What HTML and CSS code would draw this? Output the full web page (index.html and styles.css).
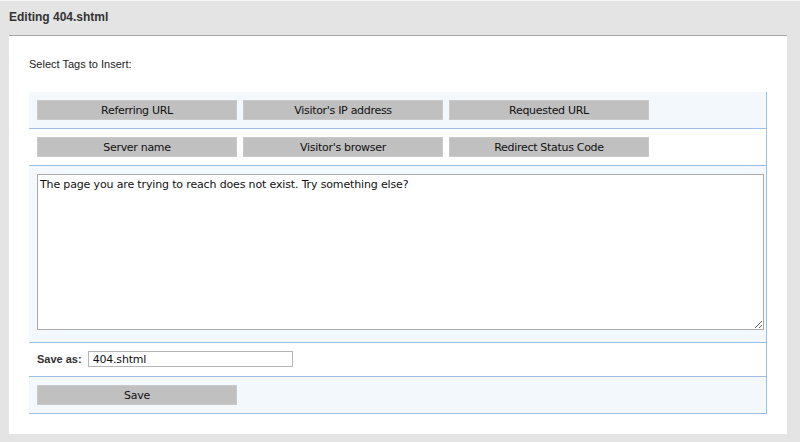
FILE: index.html
```html
<!DOCTYPE html>
<html>
<head>
<meta charset="utf-8">
<title>Editing 404.shtml</title>
<link rel="stylesheet" href="styles.css">
</head>
<body>
<div class="header">Editing 404.shtml</div>
<div class="panel">
  <p class="intro">Select Tags to Insert:</p>
  <div class="table">
    <div class="row alt">
      <button class="btn">Referring URL</button>
      <button class="btn">Visitor's IP address</button>
      <button class="btn">Requested URL</button>
    </div>
    <div class="row">
      <button class="btn">Server name</button>
      <button class="btn">Visitor's browser</button>
      <button class="btn">Redirect Status Code</button>
    </div>
    <div class="row alt editor-row">
      <textarea class="editor">The page you are trying to reach does not exist. Try something else?</textarea>
    </div>
    <div class="row save-row">
      <label class="save-label">Save as:</label>
      <input class="save-input" type="text" value="404.shtml">
    </div>
    <div class="row alt">
      <button class="btn">Save</button>
    </div>
  </div>
</div>
</body>
</html>
```
FILE: styles.css
```css
html, body {
  margin: 0;
  padding: 0;
  background: #e4e4e4;
  height: 442px;
  overflow: hidden;
}
body {
  border-top: 1px solid #f4f4f4;
  box-sizing: border-box;
}
.header {
  height: 34px;
  line-height: 33px;
  padding-left: 9px;
  font-family: "Liberation Sans", Arial, sans-serif;
  font-weight: bold;
  font-size: 12px;
  color: #333;
}
.panel {
  margin: 0 13px 0 9px;
  border-top: 1px solid #a6a6a6;
  background: #fff;
  height: 399px;
  box-sizing: border-box;
  padding: 20px 20px 0 20px;
}
.intro {
  margin: 0;
  height: 36px;
  line-height: 17px;
  font-family: "Liberation Sans", Arial, sans-serif;
  font-size: 11px;
  color: #222;
}
.table {
  border-right: 1px solid #9dbfe6;
}
.row {
  display: flex;
  align-items: center;
  gap: 6px;
  padding: 8px 8px;
  border-bottom: 1px solid #9dbfe6;
  background: #fff;
}
.row.alt {
  background: #f3f8fd;
}
.btn {
  flex: none;
  width: 200px;
  height: 20px;
  margin: 0;
  padding: 0;
  background: #c0c0c0;
  border: 1px solid #c9c9c9;
  font-family: "DejaVu Sans", sans-serif;
  font-size: 11px;
  letter-spacing: -0.3px;
  color: #111;
}
.editor-row {
  align-items: flex-start;
  padding: 8px 2px 12px 8px;
}
.editor {
  flex: none;
  display: block;
  width: 727px;
  height: 156px;
  box-sizing: border-box;
  margin: 0;
  padding: 3px 2px;
  border: 1px solid #aaa;
  background: #fff;
  font-family: "DejaVu Sans", sans-serif;
  font-size: 11px;
  letter-spacing: -0.15px;
  color: #111;
  resize: both;
}
.save-row {
  gap: 6px;
  padding-bottom: 9px;
}
.save-label {
  font-family: "Liberation Sans", Arial, sans-serif;
  font-weight: bold;
  font-size: 11px;
  color: #333;
}
.save-input {
  flex: none;
  width: 205px;
  height: 16px;
  box-sizing: border-box;
  margin: 0;
  padding: 0 4px;
  border: 1px solid #b5b5b5;
  font-family: "DejaVu Sans", sans-serif;
  font-size: 11px;
  letter-spacing: -0.2px;
  color: #111;
}
```
